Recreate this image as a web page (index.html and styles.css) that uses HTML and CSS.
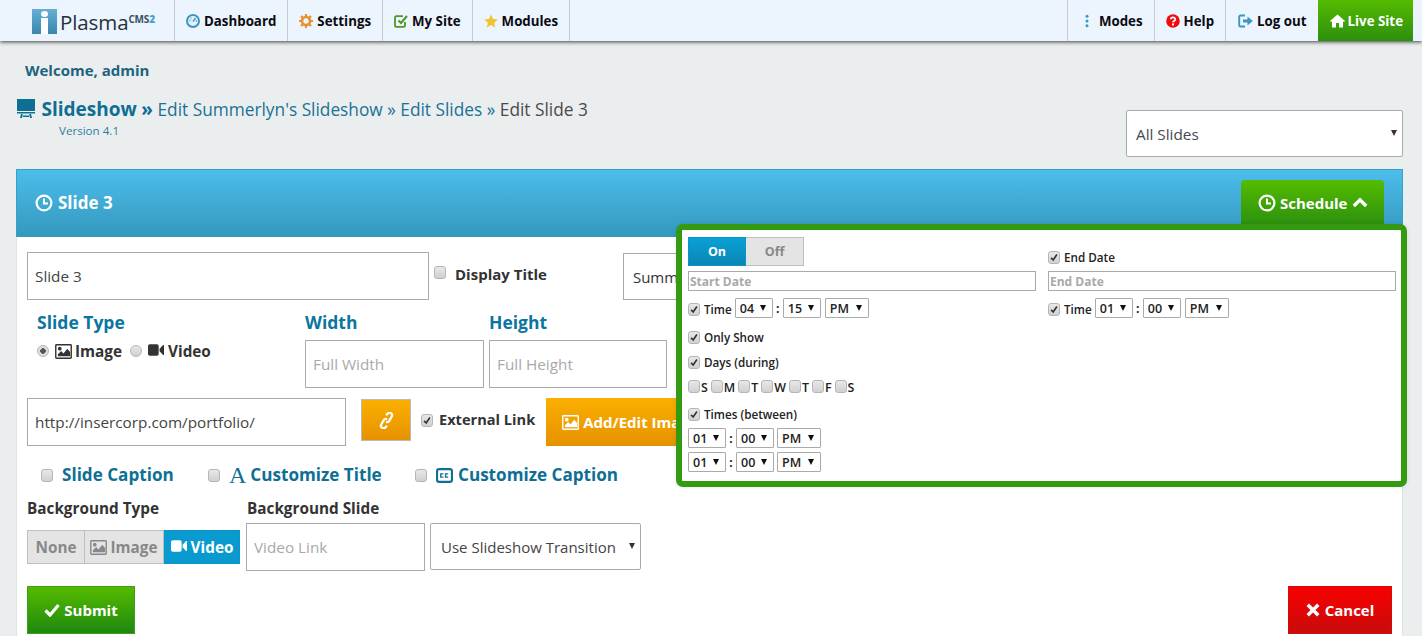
FILE: index.html
```html
<!DOCTYPE html>
<html lang="en">
<head>
<meta charset="utf-8">
<title>PlasmaCMS2 - Edit Slide 3</title>
<link rel="stylesheet" href="styles.css">
</head>
<body>
<svg class="defs" width="0" height="0" aria-hidden="true">
  <symbol id="i-clock" viewBox="0 0 18 18"><circle cx="9" cy="9" r="7.4" fill="none" stroke="currentColor" stroke-width="2.2"/><path d="M9 4.5V9.6H13" fill="none" stroke="currentColor" stroke-width="2"/></symbol>
  <symbol id="i-image" viewBox="0 0 18 16"><path fill-rule="evenodd" fill="currentColor" d="M1.5 0h15A1.5 1.5 0 0 1 18 1.500v13a1.500 1.500 0 0 1-1.500 1.500h-15A1.500 1.500 0 0 1 0 14.500v-13A1.500 1.500 0 0 1 1.500 0zM1.500 1.500v13h15v-13zM3 13v-2l3.500-3.500L9 10l4-5 3 3.500V13zM5 3a2 2 0 1 1 0 4 2 2 0 0 1 0-4z"/></symbol>
  <symbol id="i-video" viewBox="0 0 18 13"><path fill="currentColor" d="M2 0h8a2 2 0 0 1 2 2v9a2 2 0 0 1-2 2H2a2 2 0 0 1-2-2V2a2 2 0 0 1 2-2zM13 5l4-4h1v11h-1l-4-4z"/></symbol>
</svg>

<nav class="topbar">
  <a class="logo"><span class="logo-mark"><span class="logo-dot"></span><span class="logo-stem"></span></span><span class="logo-name">Plasma</span><span class="logo-cms">CMS<b>2</b></span></a>
  <a class="nav-item">
    <svg class="nav-icon" viewBox="0 0 14 14"><circle cx="7" cy="7" r="6" fill="#e4f1f8" stroke="#3b97c0" stroke-width="2"/><path d="M7 7.500 9.500 4M3.500 6.500h1M5 3.800l.5.600M9.800 7h1" stroke="#3b97c0" stroke-width="1.300" fill="none"/></svg>Dashboard</a>
  <a class="nav-item">
    <svg class="nav-icon" viewBox="0 0 14 14"><circle cx="7" cy="7" r="4" fill="none" stroke="#e8912d" stroke-width="2.600"/><path d="M7 0v3M7 11v3M0 7h3M11 7h3M2 2l2 2M10 10l2 2M12 2l-2 2M4 10l-2 2" stroke="#e8912d" stroke-width="2.200"/></svg>Settings</a>
  <a class="nav-item">
    <svg class="nav-icon" viewBox="0 0 14 14"><path d="M11 8v3.500a1.300 1.300 0 0 1-1.300 1.300H2.300A1.300 1.300 0 0 1 1 11.500V3.500a1.300 1.300 0 0 1 1.300-1.300H9" fill="none" stroke="#4b9626" stroke-width="1.800"/><path d="M4.500 6.500 7 9l6-7" fill="none" stroke="#4b9626" stroke-width="2"/></svg>My Site</a>
  <a class="nav-item">
    <svg class="nav-icon" viewBox="0 0 14 14"><path fill="#eec52f" d="m7 .5 2 4.500 4.800.500-3.600 3.200 1 4.800L7 11l-4.200 2.500 1-4.800L.2 5.500 5 5z"/></svg>Modules</a>
  <span class="nav-gap"></span>
  <a class="nav-item nav-modes">
    <svg class="nav-icon nav-icon-dots" viewBox="0 0 4 14"><circle cx="2" cy="2.200" r="1.500" fill="#3b97c0"/><circle cx="2" cy="7" r="1.500" fill="#3b97c0"/><circle cx="2" cy="11.800" r="1.500" fill="#3b97c0"/></svg>Modes</a>
  <a class="nav-item">
    <svg class="nav-icon" viewBox="0 0 14 14"><circle cx="7" cy="7" r="6.800" fill="#ee0c0c"/><path d="M4.800 5.300C4.800 2.900 9.300 2.800 9.300 5.300 9.300 6.900 7 6.900 7 8.300" fill="none" stroke="#fff" stroke-width="1.800"/><rect x="6" y="9.400" width="2" height="2" fill="#fff"/></svg>Help</a>
  <a class="nav-item nav-logout">
    <svg class="nav-icon nav-icon-wide" viewBox="0 0 15 14"><path d="M7 1.500H2.500A1.300 1.300 0 0 0 1.200 2.800v8.400a1.300 1.300 0 0 0 1.300 1.300H7" fill="none" stroke="#3b97c0" stroke-width="1.900"/><path d="M5 5.500h4.500V2.500L14.800 7 9.500 11.500v-3H5z" fill="#3b97c0"/></svg>Log out</a>
  <a class="nav-live">
    <svg class="nav-icon nav-icon-wide" viewBox="0 0 15 13"><path fill="#fff" d="M7.500 0 15 6.500l-1 1-1-.800V13H9V8.500H6V13H2V6.700l-1 .800-1-1z"/></svg>Live Site</a>
</nav>

<main class="page">
  <p class="welcome">Welcome, admin</p>
  <div class="title-row">
    <div class="title-block">
      <h1 class="crumbs">
        <svg class="crumb-icon" viewBox="0 0 18 19"><path fill="#0f6f93" d="M0 0h18v12H0zM0 13h18v1.500H0zM4 15h1.800L5 19H3zM12.200 15H14l1 4h-2zM6 16.500h6V18H6z"/></svg>
        <b>Slideshow</b> <b class="sep">»</b> <span>Edit Summerlyn's Slideshow</span> <small>»</small> <span>Edit Slides</span> <small>»</small> <em>Edit Slide 3</em>
      </h1>
      <p class="version">Version 4.1</p>
    </div>
    <div class="sel sel-top"><select><option>All Slides</option></select></div>
  </div>

  <section class="panel">
    <header class="panel-head">
      <h2 class="panel-title"><svg class="ico-clock" aria-hidden="true"><use href="#i-clock"/></svg>Slide 3</h2>
      <button class="btn-schedule" type="button"><svg class="ico-clock" aria-hidden="true"><use href="#i-clock"/></svg>Schedule
        <svg class="ico-chevron" viewBox="0 0 16 11"><path d="M1.800 9 8 2.800 14.200 9" fill="none" stroke="#fff" stroke-width="3.400"/></svg></button>
    </header>

    <div class="panel-body">
      <div class="row row-title">
        <input class="field field-title" type="text" value="Slide 3">
        <label class="check check-title"><input type="checkbox"><span>Display Title</span></label>
        <div class="sel sel-show"><select><option>Summerlyn's Slideshow</option></select></div>
      </div>

      <div class="row row-type">
        <div class="col-type">
          <h3 class="blue-label">Slide Type</h3>
          <div class="radios">
            <label class="radio"><input type="radio" name="kind" checked><svg class="ico-img" aria-hidden="true"><use href="#i-image"/></svg>Image</label>
            <label class="radio"><input type="radio" name="kind"><svg class="ico-vid" aria-hidden="true"><use href="#i-video"/></svg>Video</label>
          </div>
        </div>
        <div class="col-size">
          <h3 class="blue-label">Width</h3>
          <input class="field field-width" type="text" placeholder="Full Width">
        </div>
        <div class="col-size">
          <h3 class="blue-label">Height</h3>
          <input class="field field-height" type="text" placeholder="Full Height">
        </div>
      </div>

      <div class="row row-link">
        <input class="field field-url" type="text" value="http://insercorp.com/portfolio/">
        <button class="btn-link" type="button" aria-label="Link"><svg viewBox="0 0 16 18" width="15" height="17"><path d="M7.500 3.500 9.300 1.600a2.700 2.700 0 0 1 4.300 3.200l-2.700 4.600a2.700 2.700 0 0 1-3.500 1M8.500 14.500 6.700 16.400a2.700 2.700 0 0 1-4.300-3.200l2.700-4.600a2.700 2.700 0 0 1 3.500-1" fill="none" stroke="#fff" stroke-width="2.400"/></svg></button>
        <label class="check check-external"><input type="checkbox" checked><span>External Link</span></label>
        <button class="btn-image" type="button"><svg class="ico-img" aria-hidden="true"><use href="#i-image"/></svg>Add/Edit Image</button>
      </div>

      <div class="row row-custom">
        <label class="custom custom-caption"><input type="checkbox">Slide Caption</label>
        <label class="custom custom-title"><input type="checkbox"><span class="serif-a">A</span>Customize Title</label>
        <label class="custom"><input type="checkbox"><svg class="ico-cc" viewBox="0 0 16 14"><rect x="1" y="1" width="14" height="12" rx="2" fill="none" stroke="#0f6f93" stroke-width="2"/><path d="M7 5.500H4.500v3H7M11.500 5.500H9v3h2.500" fill="none" stroke="#0f6f93" stroke-width="1.300"/></svg>Customize Caption</label>
      </div>

      <div class="row row-bg">
        <div class="col-bgtype">
          <h4 class="dark-label">Background Type</h4>
          <div class="toggle toggle-bg">
            <button class="tog tog-none" type="button">None</button>
            <button class="tog tog-image" type="button"><svg class="ico-img" aria-hidden="true"><use href="#i-image"/></svg>Image</button>
            <button class="tog tog-video" type="button"><svg class="ico-vid" aria-hidden="true"><use href="#i-video"/></svg>Video</button>
          </div>
        </div>
        <div class="col-bgslide">
          <h4 class="dark-label">Background Slide</h4>
          <div class="bg-fields">
            <input class="field field-videolink" type="text" placeholder="Video Link">
            <div class="sel sel-trans"><select><option>Use Slideshow Transition</option></select></div>
          </div>
        </div>
      </div>

      <div class="row row-actions">
        <button class="btn-submit" type="button"><svg viewBox="0 0 16 14" width="16" height="14"><path d="M1.500 7.500 6 12l8.500-10" fill="none" stroke="#fff" stroke-width="3.200"/></svg>Submit</button>
        <button class="btn-cancel" type="button"><svg viewBox="0 0 12 12" width="14" height="14"><path d="M1.500 1.500l9 9M10.500 1.500l-9 9" fill="none" stroke="#fff" stroke-width="3"/></svg>Cancel</button>
      </div>
    </div>

    <div class="schedule">
      <div class="sch-col">
        <div class="onoff">
          <span class="oo oo-on">On</span><span class="oo oo-off">Off</span>
        </div>
        <input class="sch-date" type="text" placeholder="Start Date">
        <div class="sch-time">
          <label class="mini"><input type="checkbox" checked>Time</label>
          <span class="tsel"><select><option>04</option></select></span><span class="colon">:</span><span class="tsel"><select><option>15</option></select></span><span class="tsel tsel-ap"><select><option>PM</option></select></span>
        </div>
        <label class="mini mini-line mini-only"><input type="checkbox" checked>Only Show</label>
        <label class="mini mini-line mini-days"><input type="checkbox" checked>Days (during)</label>
        <div class="days">
          <label><input type="checkbox">S</label><label><input type="checkbox">M</label><label><input type="checkbox">T</label><label><input type="checkbox">W</label><label><input type="checkbox">T</label><label><input type="checkbox">F</label><label><input type="checkbox">S</label>
        </div>
        <label class="mini mini-line mini-times"><input type="checkbox" checked>Times (between)</label>
        <div class="sch-between">
          <span class="tsel"><select><option>01</option></select></span><span class="colon">:</span><span class="tsel"><select><option>00</option></select></span><span class="tsel tsel-ap"><select><option>PM</option></select></span>
        </div>
        <div class="sch-between">
          <span class="tsel"><select><option>01</option></select></span><span class="colon">:</span><span class="tsel"><select><option>00</option></select></span><span class="tsel tsel-ap"><select><option>PM</option></select></span>
        </div>
      </div>
      <div class="sch-col">
        <label class="mini mini-line mini-end"><input type="checkbox" checked>End Date</label>
        <input class="sch-date" type="text" placeholder="End Date">
        <div class="sch-time">
          <label class="mini"><input type="checkbox" checked>Time</label>
          <span class="tsel"><select><option>01</option></select></span><span class="colon">:</span><span class="tsel"><select><option>00</option></select></span><span class="tsel tsel-ap"><select><option>PM</option></select></span>
        </div>
      </div>
    </div>
  </section>
</main>
</body>
</html>
```

FILE: styles.css
```css
* { box-sizing: border-box; }
html, body { margin: 0; height: 636px; overflow: hidden; }
body { background: #ebeeef; font-family: "Open Sans", "Liberation Sans", sans-serif; color: #333; }
.defs { position: absolute; }
h1, h2, h3, h4, p { margin: 0; }
button { font-family: inherit; cursor: pointer; }
input[type="text"]::placeholder { color: #a9a9a9; opacity: 1; }

/* top bar */
.topbar { display: flex; height: 41px; background: #ecf4fd; box-shadow: 0 1px 4px rgba(0,0,0,.75); position: relative; padding-right: 9px; }
.logo { display: flex; align-items: flex-start; width: 175px; padding: 9px 0 0 32px; border-right: 1px solid #c9cdd0; color: #25303a; }
.logo-mark { width: 25px; height: 25px; background: linear-gradient(#66b0d4, #3b86b0); position: relative; flex: none; }
.logo-dot { position: absolute; left: 9px; top: 2px; width: 7px; height: 6px; border-radius: 50%; background: #fff; }
.logo-stem { position: absolute; left: 9px; top: 9px; width: 7px; height: 16px; background: #fff; }
.logo-name { font-size: 20.500px; line-height: 26px; margin-left: 3px; letter-spacing: -.1px; }
.logo-cms { font-size: 10px; font-weight: 700; line-height: 12px; margin: 4px 0 0 0; color: #38505f; letter-spacing: -.2px; }
.logo-cms b { color: #45a0cb; }
.nav-item { display: flex; align-items: center; gap: 4px; padding: 0 11px; border-right: 1px solid #c9cdd0; font-size: 13.300px; font-weight: 700; color: #0b0b12; white-space: nowrap; }
.nav-modes { padding-left: 17px; }
.nav-icon { width: 14px; height: 14px; flex: none; }
.nav-icon-dots { width: 4px; margin-right: 6px; }
.nav-icon-wide { width: 15px; }
.nav-gap { flex: 1; border-right: 1px solid #c9cdd0; }
.nav-logout { border-right: 0; padding-left: 12px; }
.nav-live { display: flex; align-items: center; gap: 3px; padding: 0 10px 0 12px; background: linear-gradient(#55bb00, #2c8f0e); color: #fff; font-size: 13.300px; font-weight: 700; white-space: nowrap; }

/* header area */
.page { padding: 0 19px 0 16px; }
.welcome { padding: 20px 0 0 9px; font-size: 15px; line-height: 19px; font-weight: 700; color: #1c6480; }
.title-row { display: flex; justify-content: space-between; align-items: flex-start; }
.title-block { padding: 14px 0 0 1px; }
.crumbs { font-size: 17.300px; line-height: 30px; font-weight: 400; color: #1a7295; white-space: nowrap; }
.crumbs b { font-size: 19px; font-weight: 700; color: #0f6f93; }
.crumbs small { font-size: 17.300px; }
.crumbs em { font-style: normal; color: #4a4a4a; }
.crumb-icon { width: 18px; height: 19px; vertical-align: -2px; margin-right: 2px; }
.version { padding-left: 42px; font-size: 11.600px; line-height: 14px; margin-top: -1px; color: #2e7d9e; }

/* selects */
.sel { position: relative; background: #fff; border: 1px solid #aaa; }
.sel select { appearance: none; width: 100%; height: 100%; border: 0; background: transparent; font: inherit; color: inherit; outline: 0; }
.sel::after { content: ""; position: absolute; right: 5px; top: 19px; border: 3.500px solid transparent; border-top: 6px solid #333; border-bottom: 0; pointer-events: none; }
.sel-top { width: 277px; height: 47px; margin-top: 30px; border-radius: 2px; font-size: 15.300px; color: #454a50; }
.sel-top select { padding: 0 0 0 9px; }
.sel-show { width: 200px; height: 47px; margin-left: 76px; margin-top: 1px; font-size: 15px; }
.sel-show select { padding-left: 9px; }
.sel-trans { width: 211px; height: 47px; margin-left: 5px; border-radius: 2px; font-size: 15px; color: #444; }
.sel-trans select { padding-left: 10px; }

/* panel */
.panel { position: relative; margin-top: 12px; background: #fff; border: 1px solid #dfe3e5; border-width: 0 1px; }
.panel-head { height: 68px; display: flex; justify-content: space-between; padding: 10px 18px 0 18px; background: linear-gradient(#4cbdeb, #3498bd); border: 1px solid #3a9fc7; border-bottom: 0; margin: 0 -1px; }
.panel-title { display: flex; align-items: center; gap: 5px; height: 45px; font-size: 17px; font-weight: 700; color: #fff; }
.ico-clock { width: 18px; height: 18px; }
.btn-schedule { display: flex; align-items: center; gap: 4px; width: 143px; height: 47px; padding: 0 0 2px 17px; border: 0; border-radius: 4px 4px 0 0; background: linear-gradient(#55bb00, #2a8f0f); color: #fff; font-size: 15px; font-weight: 700; }
.ico-chevron { width: 16px; height: 11px; }
.panel-body { padding: 15px 10px 20px 10px; }
.row { display: flex; align-items: flex-start; }
.field { display: block; height: 48px; padding: 0 7px; border: 1px solid #aaa; background: #fff; font: inherit; font-size: 15.300px; color: #444; outline: 0; }
.field-title { width: 402px; }
.field-width { width: 179px; }
.field-height { width: 178px; }
.field-url { width: 319px; }
.field-videolink { width: 179px; }

/* custom checks */
input[type="checkbox"], input[type="radio"] { appearance: none; flex: none; margin: 0; width: 12px; height: 13px; border: 1px solid #b5b5b5; border-radius: 3px; background: linear-gradient(#e8e8e8, #d0d0d0); }
input[type="checkbox"]:checked { background: url("data:image/svg+xml,%3Csvg xmlns='http://www.w3.org/2000/svg' viewBox='0 0 12 13'%3E%3Cpath d='M2.500 7 5 9.500 9.500 3' fill='none' stroke='%23333' stroke-width='2'/%3E%3C/svg%3E") center/100% 100% no-repeat, linear-gradient(#e8e8e8, #d0d0d0); }
input[type="radio"] { width: 12px; height: 12px; border-radius: 50%; }
input[type="radio"]:checked { background: radial-gradient(circle, #555 0 2.500px, #dedede 3px); }

.check { display: flex; align-items: center; font-size: 15px; font-weight: 700; color: #333; white-space: nowrap; }
.check-title { gap: 9px; margin: 12px 0 0 5px; }
.check-title input { margin-top: -3px; }
.row-type { margin-top: 11px; }
.col-type { width: 278px; padding-left: 10px; }
.col-size { width: 184px; }
.blue-label { font-size: 17.500px; line-height: 23px; font-weight: 700; color: #0a76a0; }
.col-size .blue-label { height: 29px; }
.radios { display: flex; gap: 8px; margin-top: 7px; }
.radio { display: flex; align-items: center; font-size: 15.300px; font-weight: 700; color: #333; }
.radio input { margin-right: 6px; }
.ico-img { width: 17px; height: 15px; margin-right: 3px; }
.ico-vid { width: 16px; height: 12px; margin-right: 4px; margin-top: -2px; }
.row-link { margin-top: 10px; }
.btn-link { display: flex; align-items: center; justify-content: center; width: 50px; height: 42px; margin: 1px 0 0 15px; border: 1px solid #bbb; background: linear-gradient(#fbaf00, #e69200); padding: 0; }
.check-external { gap: 6px; margin: 13px 0 0 10px; font-size: 14.600px; }
.check-external span { margin-top: -2px; }
.btn-image { display: flex; align-items: center; width: 190px; height: 48px; margin-left: 11px; padding: 0 0 0 16px; border: 0; background: linear-gradient(#fbaf00, #e69200); color: #fff; font-size: 15px; font-weight: 700; white-space: nowrap; }
.btn-image .ico-img { margin-right: 4px; }
.row-custom { margin-top: 17px; padding-left: 14px; }
.custom { display: flex; align-items: center; font-size: 17.100px; line-height: 24px; font-weight: 700; color: #0e6f94; white-space: nowrap; }
.custom input { margin-right: 9px; }
.custom-caption { width: 167px; }
.custom-title { width: 207px; }
.serif-a { font-family: "Liberation Serif", serif; font-weight: 400; font-size: 24px; margin-right: 4px; }
.ico-cc { width: 17px; height: 15px; margin-right: 5px; }
.row-bg { margin-top: 10px; }
.col-bgtype { width: 219px; }
.dark-label { font-size: 15.300px; line-height: 20px; font-weight: 700; color: #333; padding-top: 1px; white-space: nowrap; }
.col-bgslide .dark-label { padding-left: 1px; height: 15px; }
.toggle-bg { display: flex; margin-top: 12px; }
.tog { display: flex; align-items: center; justify-content: center; height: 34px; border: 1px solid #bfbfbf; background: #e4e4e4; color: #888; font-size: 15.300px; font-weight: 700; padding: 0; white-space: nowrap; }
.tog-none { width: 58px; }
.tog-image { width: 79px; border-left: 0; }
.tog-video { width: 76px; border: 1px solid #0a96c6; background: #099bcf; color: #fff; }
.bg-fields { display: flex; margin-top: 11px; }
.row-actions { justify-content: space-between; margin-top: 15px; }
.btn-submit, .btn-cancel { display: flex; align-items: center; justify-content: center; gap: 4px; height: 48px; color: #fff; font-size: 15px; font-weight: 700; padding: 0; }
.btn-submit { width: 108px; border: 1px solid #3f9b18; background: linear-gradient(#55bb00, #1e880f); }
.btn-cancel { width: 104px; border: 1px solid #cf0d0d; background: linear-gradient(#f90000, #c90b0b); gap: 5px; }

/* schedule popup */
.schedule { position: absolute; left: 659px; top: 55px; width: 731px; height: 263px; display: flex; gap: 12px; padding: 7px 6px 0 6px; border: 6px solid #339a11; border-radius: 7px; background: #fff; box-shadow: 0 0 4px rgba(0,0,0,.1); }
.sch-col { width: 348px; flex: none; }
.onoff { display: flex; height: 29px; }
.oo { display: flex; align-items: center; justify-content: center; width: 58px; font-size: 12.500px; font-weight: 700; }
.oo-on { background: linear-gradient(#0aa0d6, #0a86b4); color: #fff; border: 1px solid #0a96c6; }
.oo-off { background: #e4e4e4; color: #888; border: 1px solid #bfbfbf; border-left: 0; }
.sch-date { display: block; width: 348px; height: 20px; margin-top: 5px; padding: 0 0 0 1px; border: 1px solid #aaa; font: inherit; font-size: 12px; font-weight: 700; color: #444; outline: 0; }
.sch-date::placeholder { color: #b5b5b5; }
.sch-time { display: flex; align-items: center; margin-top: 7px; height: 20px; }
.mini { display: flex; align-items: center; gap: 4px; font-size: 11.700px; font-weight: 600; color: #222; white-space: nowrap; }
.mini-line { height: 16px; margin-top: 10px; }
.sch-time .mini { margin-right: 3px; padding-top: 2px; }
.mini-only { margin-top: 11px; }
.mini-days { margin-top: 9px; }
.mini-times { margin-top: 11px; }
.mini-end { margin-top: 12px; margin-bottom: 6px; }
.mini-end + .sch-date { margin-top: 0; }
.days { display: flex; height: 16px; margin-top: 9px; font-size: 12.400px; font-weight: 600; color: #222; align-items: center; }
.days label { display: flex; align-items: center; gap: 0; margin-right: 3px; }
.days input { margin-top: -2px; margin-right: 1px; }
.tsel { position: relative; display: block; width: 38px; height: 20px; border: 1px solid #aaa; border-radius: 1px; background: #fff; font-size: 12.500px; font-weight: 600; color: #222; }
.tsel-ap { width: 44px; margin-left: 4px; }
.sch-between .tsel-ap { margin-left: 3px; }
.tsel select { appearance: none; width: 100%; height: 100%; border: 0; padding: 0 0 0 4px; background: transparent; font: inherit; color: inherit; outline: 0; }
.tsel::after { content: ""; position: absolute; right: 6px; top: 6px; border: 3px solid transparent; border-top: 6px solid #111; border-bottom: 0; pointer-events: none; }
.colon { width: 10px; text-align: center; font-size: 12px; font-weight: 700; color: #222; }
.sch-between { display: flex; align-items: center; height: 20px; margin-top: 4px; }
.mini-times + .sch-between { margin-top: 6px; }
```
